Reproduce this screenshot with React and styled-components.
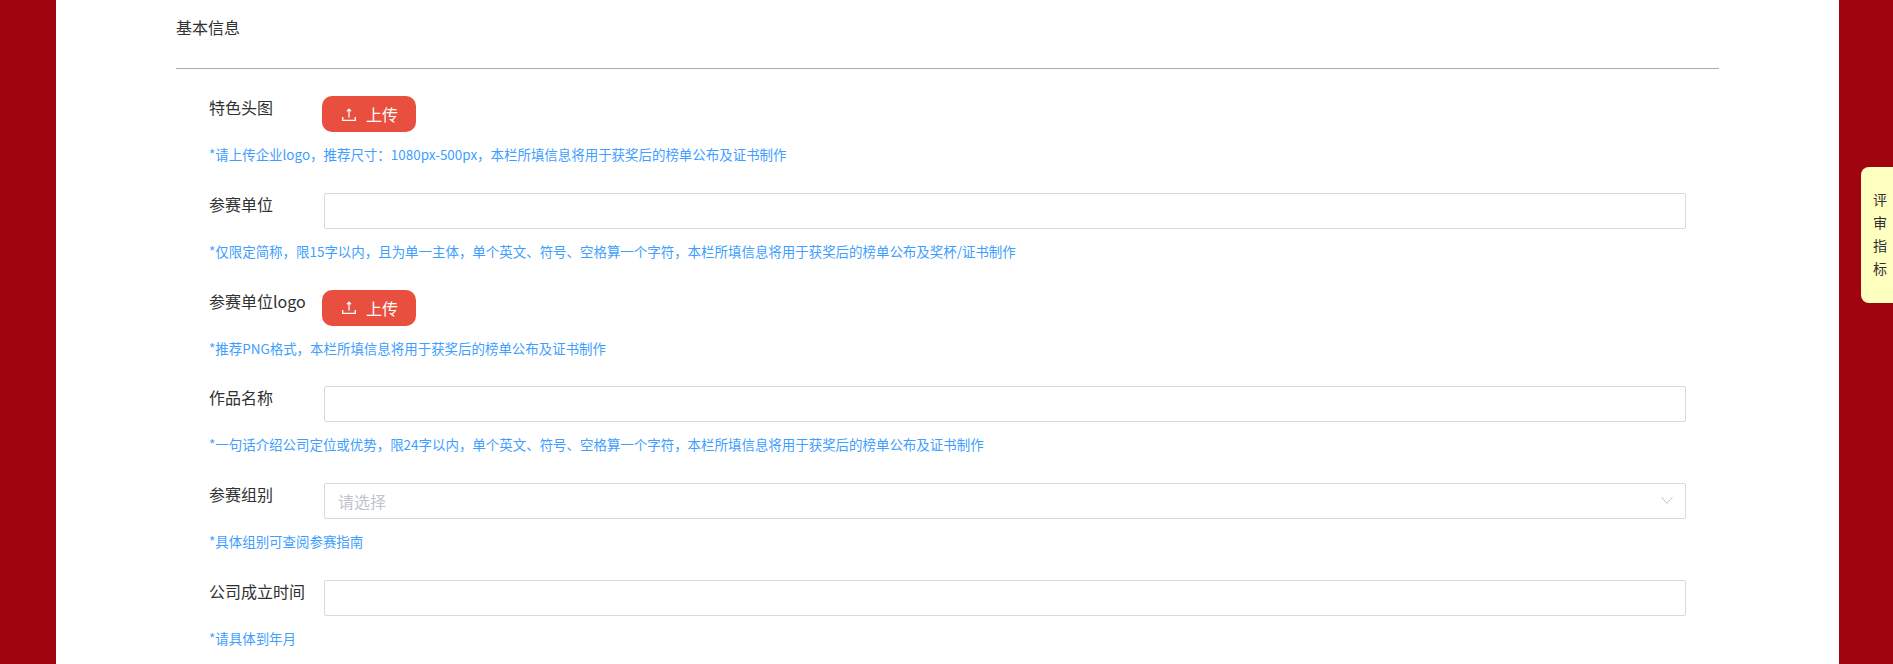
import React from 'react'
import styled, { createGlobalStyle } from 'styled-components'

const Global = createGlobalStyle`
  html, body {
    margin: 0;
    height: 664px;
    overflow: hidden;
    background: #a0050f;
    font-family: "Noto Sans CJK SC", "Noto Sans", sans-serif;
  }
`
const Page = styled.div`
  margin: 0 54px 0 56px;
  height: 664px;
  overflow: hidden;
  background: #fff;
  padding: 0 120px;
`
const Section = styled.div`
  height: 69px;
  box-sizing: border-box;
  padding-top: 15px;
  font-size: 16px;
  line-height: 24px;
  color: #303133;
  border-bottom: 1px solid #aaaaaa;
`
const Form = styled.div`
  padding: 27px 33px 0 33px;
`
const Row = styled.div`
  height: 96.8px;
`
const Line = styled.div`
  display: flex;
  align-items: flex-start;
`
const Label = styled.div`
  width: 113px;
  flex: none;
  font-size: 16px;
  line-height: 22px;
  color: #303133;
`
const Control = styled.div`
  flex: 1;
  position: relative;
  margin-left: ${p => (p.$field ? '2px' : '0')};
`
const UploadButton = styled.button`
  display: flex;
  align-items: center;
  justify-content: center;
  gap: 10px;
  width: 94px;
  height: 36px;
  padding: 0 0 0 2px;
  border: 0;
  border-radius: 10px;
  background: #e94f3e;
  color: #fff;
  font: inherit;
  font-size: 16px;
`
const TextInput = styled.input`
  display: block;
  box-sizing: border-box;
  width: 100%;
  height: 36px;
  padding: 0 13px;
  border: 1px solid #d9d9d9;
  border-radius: 2px;
  outline: none;
  background: #fff;
  font: inherit;
  font-size: 16px;
  &::placeholder {
    color: #c0c4cc;
    opacity: 1;
  }
`
const Chevron = styled.svg`
  position: absolute;
  top: 13px;
  right: 13px;
  width: 12px;
  height: 9px;
`
const Hint = styled.div`
  margin-top: 11px;
  font-size: 13.46px;
  line-height: 22px;
  color: #409eff;
`
const SideTab = styled.div`
  position: fixed;
  top: 167px;
  right: 0;
  width: 32px;
  height: 136px;
  box-sizing: border-box;
  padding: 21px 0 0 12px;
  border-radius: 8px 0 0 8px;
  background: #ffffc0;
  font-size: 14px;
  line-height: 23px;
  color: #303133;
`

const UploadIcon = () => (
  <svg width="14" height="13" viewBox="0 0 14 13" fill="none" stroke="#fff" strokeWidth="1.3">
    <path d="M0.7 9v3.3h12.6V9" />
    <path d="M7 9.5V1.2M5 3.2L7 1.2l2 2" />
  </svg>
)

const fields = [
  { label: '特色头图', type: 'upload', hint: '*请上传企业logo，推荐尺寸：1080px-500px，本栏所填信息将用于获奖后的榜单公布及证书制作' },
  { label: '参赛单位', type: 'input', hint: '*仅限定简称，限15字以内，且为单一主体，单个英文、符号、空格算一个字符，本栏所填信息将用于获奖后的榜单公布及奖杯/证书制作' },
  { label: '参赛单位logo', type: 'upload', hint: '*推荐PNG格式，本栏所填信息将用于获奖后的榜单公布及证书制作' },
  { label: '作品名称', type: 'input', hint: '*一句话介绍公司定位或优势，限24字以内，单个英文、符号、空格算一个字符，本栏所填信息将用于获奖后的榜单公布及证书制作' },
  { label: '参赛组别', type: 'select', hint: '*具体组别可查阅参赛指南' },
  { label: '公司成立时间', type: 'input', hint: '*请具体到年月' },
]

const App = () => {
  return (
    <>
      <Global />
      <Page>
        <Section>基本信息</Section>
        <Form>
          {fields.map(f => (
            <Row key={f.label}>
              <Line>
                <Label>{f.label}</Label>
                {f.type === 'upload' ? (
                  <Control>
                    <UploadButton>
                      <UploadIcon />
                      上传
                    </UploadButton>
                  </Control>
                ) : (
                  <Control $field>
                    <TextInput readOnly placeholder={f.type === 'select' ? '请选择' : ''} />
                    {f.type === 'select' && (
                      <Chevron viewBox="0 0 12 9" fill="none" stroke="#c0c4cc" strokeWidth="1">
                        <path d="M0.5 1L6 7.5L11.5 1" />
                      </Chevron>
                    )}
                  </Control>
                )}
              </Line>
              <Hint>{f.hint}</Hint>
            </Row>
          ))}
        </Form>
      </Page>
      <SideTab>
        评<br />审<br />指<br />标
      </SideTab>
    </>
  )
}

export default App
